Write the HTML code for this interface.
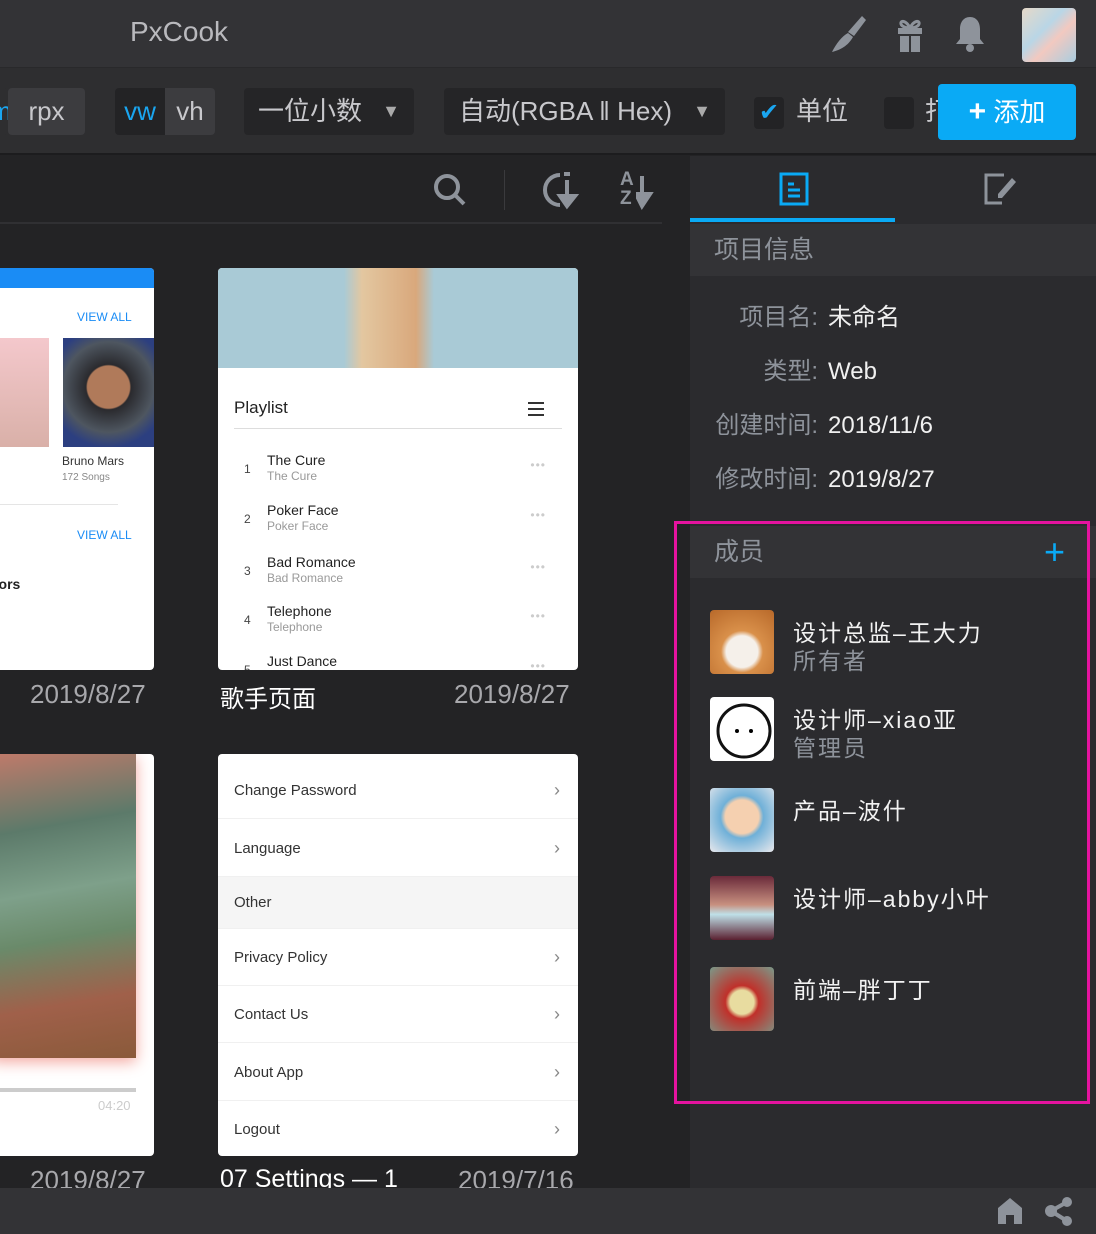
<!DOCTYPE html>
<html><head><meta charset="utf-8"><style>
*{margin:0;padding:0;box-sizing:border-box}
body{width:1096px;height:1234px;overflow:hidden;background:#232325;font-family:"Liberation Sans","Noto Sans CJK SC",sans-serif;position:relative}
.a{position:absolute}
.top{left:0;top:0;width:1096px;height:68px;background:#333336;border-bottom:1px solid #29292b}
.tool{left:0;top:68px;width:1096px;height:87px;background:#2e2e30;border-bottom:2px solid #1c1c1e}
.box{position:absolute;top:88px;height:47px;border-radius:4px;color:#c8c8cc;font-size:26px;line-height:47px}
.right{left:690px;top:156px;width:406px;height:1032px;background:#2b2b2e}
.hdr{position:absolute;left:690px;width:406px;height:52px;background:#333336;color:#8e939b;font-size:25px;line-height:52px;padding-left:24px}
.lbl{position:absolute;right:278px;color:#8e939b;font-size:24px;line-height:30px;height:30px}
.val{position:absolute;left:828px;color:#f0f0f0;font-size:24px;line-height:30px;height:30px}
.card{position:absolute;background:#fff;border-radius:4px;overflow:hidden}
.cap{position:absolute;font-size:26px;color:#a8a8ac}
.av{position:absolute;left:710px;width:64px;height:64px;border-radius:4px;overflow:hidden}
.mn{position:absolute;left:793px;color:#f2f2f2;font-size:23px;letter-spacing:2px}
.mr{position:absolute;left:793px;color:#8e939b;font-size:23px;letter-spacing:2px}
.row{position:absolute;left:0;width:360px;height:57px;border-bottom:1px solid #f0f0f0;font-size:15px;color:#333;line-height:57px;padding-left:16px}
.row i{position:absolute;right:18px;top:0;font-style:normal;color:#888;font-size:18px}
.pl{position:absolute;left:0;width:360px;height:50px}
.pl b{position:absolute;left:26px;top:18px;font-weight:normal;font-size:12px;color:#444}
.pl s{position:absolute;left:49px;top:8px;text-decoration:none;font-size:14px;color:#222}
.pl u{position:absolute;left:49px;top:25px;text-decoration:none;font-size:12px;color:#999}
.pl em{position:absolute;right:32px;top:14px;font-style:normal;color:#ccc;font-size:12px;letter-spacing:1px}
</style></head><body>
<div class="a top"></div>
<div class="a" style="left:130px;top:16px;color:#b9b9bd;font-size:28px">PxCook</div>
<svg class="a" style="left:828px;top:14px" width="40" height="40" viewBox="0 0 40 40"><path d="M34 2 L38 6 L26 22 L20 18 Z M20 19 L25 23 C20 32 12 36 4 38 C8 30 14 22 20 19Z" fill="#8e939b"/></svg>
<svg class="a" style="left:892px;top:16px" width="36" height="38" viewBox="0 0 36 38"><path d="M6 12h24v6H6zM8 20h9v16H8zM19 20h9v16h-9z" fill="#8e939b"/><path d="M18 12C14 4 8 4 9 8c1 3 6 4 9 4 3 0 8-1 9-4 1-4-5-4-9 4" stroke="#8e939b" stroke-width="3" fill="none"/></svg>
<svg class="a" style="left:952px;top:14px" width="36" height="40" viewBox="0 0 36 40"><path d="M18 3c-7 0-10 6-10 12v10l-4 5h28l-4-5V15c0-6-3-12-10-12z" fill="#8e939b"/><circle cx="18" cy="34" r="4" fill="#8e939b"/></svg>
<div class="a" style="left:1022px;top:8px;width:54px;height:54px;border-radius:4px;background:linear-gradient(135deg,#e6d9c8,#b9d6e6 40%,#f2c9c0 60%,#a9cde0)"></div>

<div class="a tool"></div>
<div class="box" style="left:-10px;width:18px;background:#2e2e30;color:#1aa6f0">m</div>
<div class="box" style="left:8px;width:77px;background:#3c3c3f;text-align:center">rpx</div>
<div class="box" style="left:115px;width:50px;background:#232325;color:#1aa6f0;text-align:center;border-radius:4px 0 0 4px">vw</div>
<div class="box" style="left:165px;width:50px;background:#3c3c3f;text-align:center;border-radius:0 4px 4px 0">vh</div>
<div class="box" style="left:244px;width:170px;background:#252527;padding-left:14px">一位小数 <span style="position:absolute;right:14px;top:0;font-size:18px;color:#aaa">▼</span></div>
<div class="box" style="left:444px;width:281px;background:#252527;padding-left:15px">自动(RGBA ‖ Hex) <span style="position:absolute;right:14px;top:0;font-size:18px;color:#aaa">▼</span></div>
<div class="box" style="left:754px;top:97px;width:30px;height:32px;background:#232325;color:#1aa6f0;font-size:24px;line-height:32px;text-align:center">✔</div>
<div class="box" style="left:796px;">单位</div>
<div class="box" style="left:884px;top:97px;width:30px;height:32px;background:#232325"></div>
<div class="box" style="left:925px;width:14px;overflow:hidden">打</div>
<div class="a" style="left:938px;top:84px;width:138px;height:56px;background:#0aaaf5;border-radius:4px;color:#fff;font-size:26px;line-height:56px;text-align:center"><b style="font-size:30px">+</b> 添加</div>

<div class="a" style="left:0;top:222px;width:662px;height:2px;background:#303033"></div>
<svg class="a" style="left:432px;top:172px" width="36" height="36" viewBox="0 0 36 36"><circle cx="15" cy="15" r="11" stroke="#8e939b" stroke-width="4" fill="none"/><path d="M23 23l9 9" stroke="#8e939b" stroke-width="4"/></svg>
<div class="a" style="left:504px;top:170px;width:1px;height:40px;background:#3a3a3d"></div>
<svg class="a" style="left:540px;top:170px" width="44" height="40" viewBox="0 0 44 40"><path d="M20 5a14 14 0 1 0 0 30" stroke="#8e939b" stroke-width="4" fill="none"/><path d="M24 4h6M27 10v20M20 26l7 10 8-10z" stroke="#8e939b" stroke-width="4" fill="#8e939b"/></svg>
<div class="a" style="left:620px;top:170px;color:#8e939b;font-size:19px;line-height:19px;font-weight:bold">A<br>Z</div>
<svg class="a" style="left:636px;top:170px" width="20" height="40" viewBox="0 0 20 40"><path d="M6 6v24M0 24l6 12 8-12z" stroke="#8e939b" stroke-width="4" fill="#8e939b"/></svg>

<div class="card" style="left:-10px;top:268px;width:164px;height:402px">
 <div class="a" style="left:0;top:0;width:164px;height:20px;background:#1a8cf5"></div>
 <div class="a" style="left:87px;top:42px;color:#1a8cf5;font-size:12px">VIEW ALL</div>
 <div class="a" style="left:0;top:70px;width:59px;height:109px;background:linear-gradient(#f4c8cc,#d9b0a8)"></div>
 <div class="a" style="left:73px;top:70px;width:91px;height:109px;background:radial-gradient(circle at 50% 45%,#b07a5a 0 28%,#2a2a2e 30%,#4e5660 60%,#2c3f80 80%)"></div>
 <div class="a" style="left:72px;top:186px;font-size:12px;color:#333">Bruno Mars</div>
 <div class="a" style="left:72px;top:204px;font-size:10px;color:#888">172 Songs</div>
 <div class="a" style="left:0;top:236px;width:128px;height:1px;background:#e5e5e5"></div>
 <div class="a" style="left:87px;top:260px;color:#1a8cf5;font-size:12px">VIEW ALL</div>
 <div class="a" style="left:0;top:308px;font-size:14px;color:#222;font-weight:bold">pors</div>
</div>
<div class="card" style="left:218px;top:268px;width:360px;height:402px">
 <div class="a" style="left:0;top:0;width:360px;height:100px;background:linear-gradient(90deg,#a9cad6 0,#a9cad6 35%,#e3c7a0 40%,#d9a87c 55%,#a9cad6 60%,#a9cad6)"></div>
 <div class="a" style="left:16px;top:130px;font-size:17px;color:#222">Playlist</div>
 <div class="a" style="left:310px;top:134px;width:16px;height:2px;background:#333;box-shadow:0 6px 0 #333,0 12px 0 #333"></div>
 <div class="a" style="left:16px;top:160px;width:328px;height:1px;background:#ddd"></div>
 <div class="pl" style="top:176px"><b>1</b><s>The Cure</s><u>The Cure</u><em>•••</em></div>
 <div class="pl" style="top:226px"><b>2</b><s>Poker Face</s><u>Poker Face</u><em>•••</em></div>
 <div class="pl" style="top:278px"><b>3</b><s>Bad Romance</s><u>Bad Romance</u><em>•••</em></div>
 <div class="pl" style="top:327px"><b>4</b><s>Telephone</s><u>Telephone</u><em>•••</em></div>
 <div class="pl" style="top:377px"><b>5</b><s>Just Dance</s><u>Just Dance</u><em>•••</em></div>
</div>
<div class="cap" style="left:30px;top:679px">2019/8/27</div>
<div class="cap" style="left:220px;top:679px;color:#fff;font-size:24px">歌手页面</div>
<div class="cap" style="left:454px;top:679px">2019/8/27</div>

<div class="card" style="left:-10px;top:754px;width:164px;height:402px">
 <div class="a" style="left:0;top:0;width:146px;height:304px;background:linear-gradient(170deg,#c07a6a 0%,#5c7a6a 25%,#7ea08a 45%,#6a8a6a 60%,#a0604a 80%,#8a5a3a 100%);box-shadow:0 4px 14px #f4a8a0"></div>
 <div class="a" style="left:0;top:334px;width:146px;height:4px;background:#ccc"></div>
 <div class="a" style="left:108px;top:344px;font-size:13px;color:#ccc">04:20</div>
</div>
<div class="card" style="left:218px;top:754px;width:360px;height:402px">
 <div class="row" style="top:8px">Change Password<i>›</i></div>
 <div class="row" style="top:66px">Language<i>›</i></div>
 <div class="row" style="top:123px;height:52px;line-height:52px;background:#f5f5f5">Other</div>
 <div class="row" style="top:175px">Privacy Policy<i>›</i></div>
 <div class="row" style="top:232px">Contact Us<i>›</i></div>
 <div class="row" style="top:290px">About App<i>›</i></div>
 <div class="row" style="top:347px;border:0">Logout<i>›</i></div>
</div>
<div class="cap" style="left:30px;top:1165px">2019/8/27</div>
<div class="cap" style="left:220px;top:1165px;color:#fff;font-size:25px">07 Settings — 1</div>
<div class="cap" style="left:458px;top:1165px">2019/7/16</div>

<div class="a right"></div>
<div class="a" style="left:690px;top:218px;width:205px;height:4px;background:#0aaaf5"></div>
<svg class="a" style="left:778px;top:172px" width="32" height="34" viewBox="0 0 32 34"><rect x="3" y="2" width="26" height="30" stroke="#0aaaf5" stroke-width="3" fill="none"/><path d="M10 12h6M10 18h12M10 24h12" stroke="#0aaaf5" stroke-width="3"/></svg>
<svg class="a" style="left:982px;top:172px" width="36" height="34" viewBox="0 0 36 34"><path d="M22 3H4v28h16" stroke="#8e939b" stroke-width="3" fill="none"/><path d="M30 6l4 4-14 16h-4v-4z" fill="#8e939b"/></svg>
<div class="hdr" style="top:224px">项目信息</div>
<div class="lbl" style="top:303px">项目名:</div><div class="val" style="top:303px">未命名</div>
<div class="lbl" style="top:357px">类型:</div><div class="val" style="top:357px">Web</div>
<div class="lbl" style="top:411px">创建时间:</div><div class="val" style="top:411px">2018/11/6</div>
<div class="lbl" style="top:465px">修改时间:</div><div class="val" style="top:465px">2019/8/27</div>
<div class="hdr" style="top:526px">成员</div>
<div class="a" style="left:1044px;top:536px;color:#0aaaf5;font-size:36px;line-height:32px">+</div>
<div class="a" style="left:674px;top:521px;width:416px;height:583px;border:3px solid #e5139f"></div>

<div class="av" style="top:610px;background:radial-gradient(circle at 50% 65%,#f5f0ea 0 30%,#d9904a 40%,#b8692a)"></div>
<div class="mn" style="top:614px">设计总监–王大力</div><div class="mr" style="top:642px">所有者</div>
<div class="av" style="top:697px;background:#fff"><svg width="64" height="64"><circle cx="34" cy="34" r="26" stroke="#111" stroke-width="3" fill="none"/><circle cx="27" cy="34" r="2"/><circle cx="41" cy="34" r="2"/></svg></div>
<div class="mn" style="top:701px">设计师–xiao亚</div><div class="mr" style="top:729px">管理员</div>
<div class="av" style="top:788px;background:radial-gradient(circle at 50% 45%,#f5d0b0 0 35%,#6fb0d8 45%,#e8e8ec)"></div>
<div class="mn" style="top:792px">产品–波什</div>
<div class="av" style="top:876px;background:linear-gradient(#6a2a3a,#c89080 45%,#bfe0e8 60%,#5a2030)"></div>
<div class="mn" style="top:880px">设计师–abby小叶</div>
<div class="av" style="top:967px;background:radial-gradient(circle at 50% 55%,#e8dca0 0 25%,#c0302a 35%,#7a9a8a)"></div>
<div class="mn" style="top:971px">前端–胖丁丁</div>

<div class="a" style="left:0;top:1188px;width:1096px;height:46px;background:#333336"></div>
<svg class="a" style="left:996px;top:1196px" width="28" height="30" viewBox="0 0 28 30"><path d="M14 2L2 12v16h8v-9h8v9h8V12z" fill="#8e939b"/></svg>
<svg class="a" style="left:1044px;top:1196px" width="30" height="30" viewBox="0 0 30 30"><circle cx="23" cy="6" r="5" fill="#8e939b"/><circle cx="7" cy="15" r="6" fill="#8e939b"/><circle cx="23" cy="25" r="5" fill="#8e939b"/><path d="M7 15L23 6M7 15l16 10" stroke="#8e939b" stroke-width="4"/></svg>
</body></html>
